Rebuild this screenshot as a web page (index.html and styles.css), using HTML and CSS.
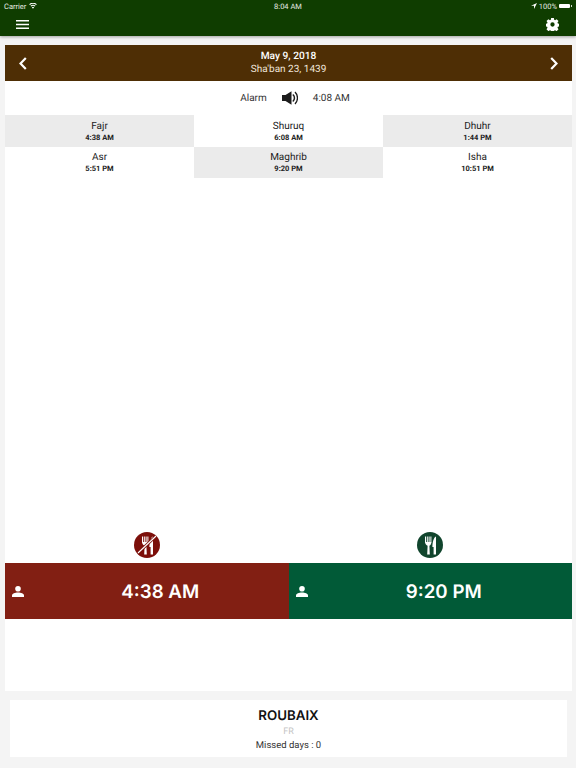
FILE: index.html
```html
<!DOCTYPE html>
<html lang="en">
<head>
<meta charset="utf-8">
<title>Prayer times</title>
<link rel="stylesheet" href="styles.css">
</head>
<body>
<header class="topbar">
  <div class="status">
    <div class="status-left"><span>Carrier</span>
      <svg class="wifi" viewBox="0 0 16 12" width="8" height="6"><path d="M8 11.500 5.600 8.600a3.600 3.600 0 0 1 4.800 0zM4.400 7.200 3 5.500a7.600 7.600 0 0 1 10 0l-1.400 1.700a5.400 5.400 0 0 0-7.200 0zM1.800 4.100.4 2.400a11.600 11.600 0 0 1 15.200 0l-1.400 1.700a9.400 9.400 0 0 0-12.400 0z" fill="#fff"/></svg>
    </div>
    <span class="status-time">8:04 AM</span>
    <div class="status-right">
      <svg viewBox="0 0 10 10" width="6" height="6"><path d="M10 0 0 4.500h5V10z" fill="#fff"/></svg>
      <span>100%</span>
      <span class="battery"></span>
    </div>
  </div>
  <div class="nav">
    <svg class="menu" viewBox="0 0 13 9" width="13" height="9"><path d="M0 .8h13M0 4.500h13M0 8.200h13" stroke="#fff" stroke-width="1.500"/></svg>
    <svg class="gear" viewBox="0 0 24 24" width="13" height="13"><path fill="#fff" fill-rule="evenodd" d="M9.500 0h5l.6 3.300 1.700.7 2.800-1.900 3.500 3.500-1.900 2.800.7 1.700 3.100.6v5l-3.100.6-.7 1.700 1.900 2.800-3.500 3.500-2.800-1.900-1.700.7-.6 3.100h-5l-.6-3.100-1.700-.7-2.800 1.900-3.500-3.500 1.900-2.800-.7-1.700-3.100-.6v-5l3.100-.6.7-1.700-1.900-2.800 3.500-3.500 2.800 1.900 1.700-.7zM12 8a4 4 0 1 0 0 8 4 4 0 0 0 0-8z"/></svg>
  </div>
</header>

<main class="card">
  <section class="datebar">
    <svg class="chev" viewBox="0 0 8 13" width="8" height="13"><path d="M6.800 1 1.500 6.500 6.800 12" fill="none" stroke="#fff" stroke-width="2.200"/></svg>
    <div class="dates">
      <div class="greg">May 9, 2018</div>
      <div class="hijri">Sha'ban 23, 1439</div>
    </div>
    <svg class="chev" viewBox="0 0 8 13" width="8" height="13"><path d="M1.200 1 6.500 6.500 1.200 12" fill="none" stroke="#fff" stroke-width="2.200"/></svg>
  </section>

  <section class="alarm">
    <span>Alarm</span>
    <svg viewBox="0 0 16 14" width="16" height="14"><path d="M0 4h3.500L9.500.3v13.400L3.500 10H0z" fill="#1c1c1c"/><path d="M10.800 3.500a4.500 4.500 0 0 1 0 7" fill="none" stroke="#1c1c1c" stroke-width="1.500"/><path d="M13 1a8.500 8.500 0 0 1 0 12" fill="none" stroke="#1c1c1c" stroke-width="1.300"/></svg>
    <span>4:08 AM</span>
  </section>

  <section class="times">
    <div class="cell shade"><div class="name">Fajr</div><div class="time">4:38 AM</div></div>
    <div class="cell"><div class="name">Shuruq</div><div class="time">6:08 AM</div></div>
    <div class="cell shade"><div class="name">Dhuhr</div><div class="time">1:44 PM</div></div>
    <div class="cell"><div class="name">Asr</div><div class="time">5:51 PM</div></div>
    <div class="cell shade"><div class="name">Maghrib</div><div class="time">9:20 PM</div></div>
    <div class="cell"><div class="name">Isha</div><div class="time">10:51 PM</div></div>
  </section>

  <section class="fast">
    <div class="fast-col">
      <span class="badge badge-red">
        <svg viewBox="0 0 26 26" width="26" height="26"><path d="M8.500 4.500v6M10.300 4.500v6M12.100 4.500v6M13.900 4.500v6" stroke="#fff" stroke-width="1"/><path d="M8 10h6.400c0 2-1 3.300-2 3.700l.4 8.800h-2.600l.4-8.800c-1-.4-2.600-1.700-2.600-3.700z" fill="#fff"/><path d="M19 4.500v18h-2.400v-7.500h-1.200c0-5 1.300-9.500 3.600-10.500z" fill="#fff"/><path d="M22 4 4 21" stroke="#7c0f0a" stroke-width="3"/><path d="M22 4 4 21" stroke="#fff" stroke-width="1.100"/></svg>
      </span>
      <div class="bar bar-red">
        <svg class="person" viewBox="0 0 12 11" width="12" height="11"><circle cx="6" cy="2.800" r="2.800" fill="#fff"/><path d="M0 11V9.500C0 7.500 3 6.500 6 6.500s6 1 6 3V11z" fill="#fff"/></svg>
        <span class="bar-time">4:38 AM</span>
      </div>
    </div>
    <div class="fast-col">
      <span class="badge badge-green">
        <svg viewBox="0 0 26 26" width="26" height="26"><path d="M8.500 4.500v6M10.300 4.500v6M12.100 4.500v6M13.900 4.500v6" stroke="#fff" stroke-width="1"/><path d="M8 10h6.400c0 2-1 3.300-2 3.700l.4 8.800h-2.600l.4-8.800c-1-.4-2.600-1.700-2.600-3.700z" fill="#fff"/><path d="M19 4.500v18h-2.400v-7.500h-1.200c0-5 1.300-9.500 3.600-10.500z" fill="#fff"/></svg>
      </span>
      <div class="bar bar-green">
        <svg class="person" viewBox="0 0 12 11" width="12" height="11"><circle cx="6" cy="2.800" r="2.800" fill="#fff"/><path d="M0 11V9.500C0 7.500 3 6.500 6 6.500s6 1 6 3V11z" fill="#fff"/></svg>
        <span class="bar-time">9:20 PM</span>
      </div>
    </div>
  </section>
</main>

<footer class="place">
  <div class="city">ROUBAIX</div>
  <div class="country">FR</div>
  <div class="missed">Missed days : 0</div>
</footer>
</body>
</html>
```

FILE: styles.css
```css
* { box-sizing: border-box; }
html, body { margin: 0; height: 768px; overflow: hidden; }
body {
  background: #f4f4f4;
  font-family: Roboto, "Liberation Sans", sans-serif;
  color: #1c1c1c;
  display: flex;
  flex-direction: column;
  text-rendering: geometricPrecision;
}
.topbar {
  height: 36px;
  background: #0f3d00;
  color: #fff;
  box-shadow: 0 1px 3px rgba(0,0,0,.35);
  flex: none;
}
.status {
  height: 12px;
  padding: 0 6px 0 4px;
  display: grid;
  grid-template-columns: 1fr auto 1fr;
  align-items: center;
  font-size: 7.500px;
  color: #e4ebe0;
}
.status-left { display: flex; align-items: center; gap: 3px; }
.status-time { transform: translateX(1px); }
.status-right { display: flex; align-items: center; justify-content: flex-end; gap: 2px; }
.battery { position: relative; width: 11px; height: 4.500px; background: #fff; border-radius: 1px; }
.battery::after {
  content: "";
  position: absolute;
  right: -1.500px;
  top: 1.250px;
  width: 1px;
  height: 2px;
  background: #cfd8ca;
}
.nav {
  height: 25px;
  padding: 0 17px 0 16px;
  display: flex;
  align-items: center;
  justify-content: space-between;
}
.card {
  margin: 9px 4px 0 5px;
  height: 646px;
  background: #fff;
  display: flex;
  flex-direction: column;
  flex: none;
}
.datebar {
  height: 36px;
  background: #4e2e05;
  color: #fff;
  padding: 0 14px;
  display: flex;
  align-items: center;
  justify-content: space-between;
}
.dates { text-align: center; padding-top: 1px; }
.greg { font-size: 10.200px; font-weight: 500; line-height: 13px; }
.hijri { font-size: 10px; line-height: 14px; color: #eee5da; }
.alarm {
  height: 34px;
  padding-left: 13px;
  display: flex;
  align-items: center;
  justify-content: center;
  gap: 15px;
  font-size: 10px;
  color: #333;
}
.times {
  display: grid;
  grid-template-columns: repeat(3, 1fr);
  grid-auto-rows: 31.500px;
}
.cell { text-align: center; padding-top: 4.500px; }
.shade { background: #ebebeb; }
.name { font-size: 10px; line-height: 13px; color: #222; }
.time { font-size: 7.500px; font-weight: 700; line-height: 9.500px; color: #222; }
.fast {
  margin-top: auto;
  margin-bottom: 72px;
  display: grid;
  grid-template-columns: 1fr 1fr;
}
.fast-col {
  min-width: 0;
  display: flex;
  flex-direction: column;
  align-items: center;
  gap: 5px;
}
.badge {
  width: 26px;
  height: 26px;
  border-radius: 50%;
  display: block;
}
.badge svg { display: block; }
.badge-red { background: #7c0f0a; }
.badge-green { background: #11452d; }
.bar {
  width: 100%;
  height: 56px;
  padding-left: 27px;
  display: flex;
  align-items: center;
  justify-content: center;
  position: relative;
  color: #fff;
}
.bar-red { background: #821f13; }
.bar-green { background: #015a37; }
.person { position: absolute; left: 7px; top: 23px; }
.bar-time { font-family: Inter, Roboto, sans-serif; font-size: 18.700px; font-weight: 600; }
.place {
  margin: 9px 9px 0 10px;
  height: 57px;
  background: #fff;
  text-align: center;
  padding-top: 8px;
  flex: none;
}
.city { font-family: Inter, Roboto, sans-serif; font-size: 13.300px; font-weight: 600; line-height: 17px; color: #111; }
.country { font-size: 9px; line-height: 14px; color: #c4c4c4; }
.missed { font-size: 9.500px; line-height: 14px; color: #333; }
```
